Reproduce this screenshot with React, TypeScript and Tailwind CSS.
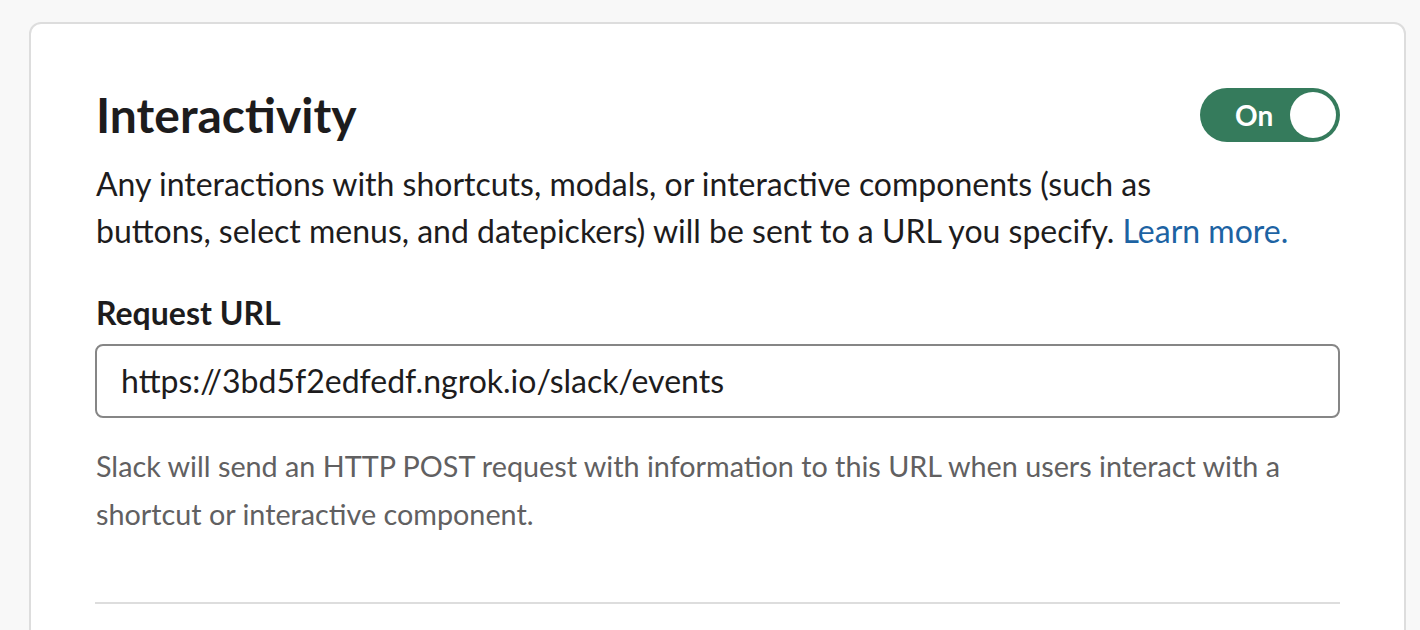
import React from "react";

export default function App() {
  return (
    <div className="min-h-[630px] h-[630px] overflow-hidden bg-[#f8f8f8] font-['Lato',sans-serif] pl-[29px] pt-[22px]">
      <div className="w-[1377px] h-[700px] rounded-[12px] border-2 border-[#dddddd] bg-white pl-[65px] pr-[64px] pt-[62px]">
        <div className="flex items-center justify-between">
          <h2 className="text-[48px] leading-[1.2] font-bold text-[#1d1c1d]">Interactivity</h2>
          <div className="flex items-center w-[140px] h-[54px] rounded-full bg-[#357b5c] pl-[35px] pr-[4px]">
            <span className="text-[28px] leading-none font-bold text-white">On</span>
            <span className="ml-auto w-[46px] h-[46px] rounded-full bg-white" />
          </div>
        </div>
        <p className="mt-[16px] text-[32px] leading-[47.5px] text-[#1d1c1d] whitespace-nowrap">
          Any interactions with shortcuts, modals, or interactive components (such as
          <br />
          buttons, select menus, and datepickers) will be sent to a URL you specify.{" "}
          <a className="text-[#1d63a3]">Learn more.</a>
        </p>
        <div className="mt-[39px] text-[32px] leading-[1.2] font-bold text-[#1d1c1d]">Request URL</div>
        <div className="mt-[12px] h-[74px] rounded-[8px] border-2 border-[#868686] flex items-center pl-[24px] -ml-[1px]">
          <span className="text-[32px] leading-[1.2] text-[#1d1c1d]">https://3bd5f2edfedf.ngrok.io/slack/events</span>
        </div>
        <p className="mt-[24px] text-[28.75px] leading-[48px] text-[#616061]">
          Slack will send an HTTP POST request with information to this URL when users interact with a shortcut or interactive component.
        </p>
        <div className="mt-[64px] h-[2px] bg-[#dddddd] -ml-[1px]" />
      </div>
    </div>
  );
}
